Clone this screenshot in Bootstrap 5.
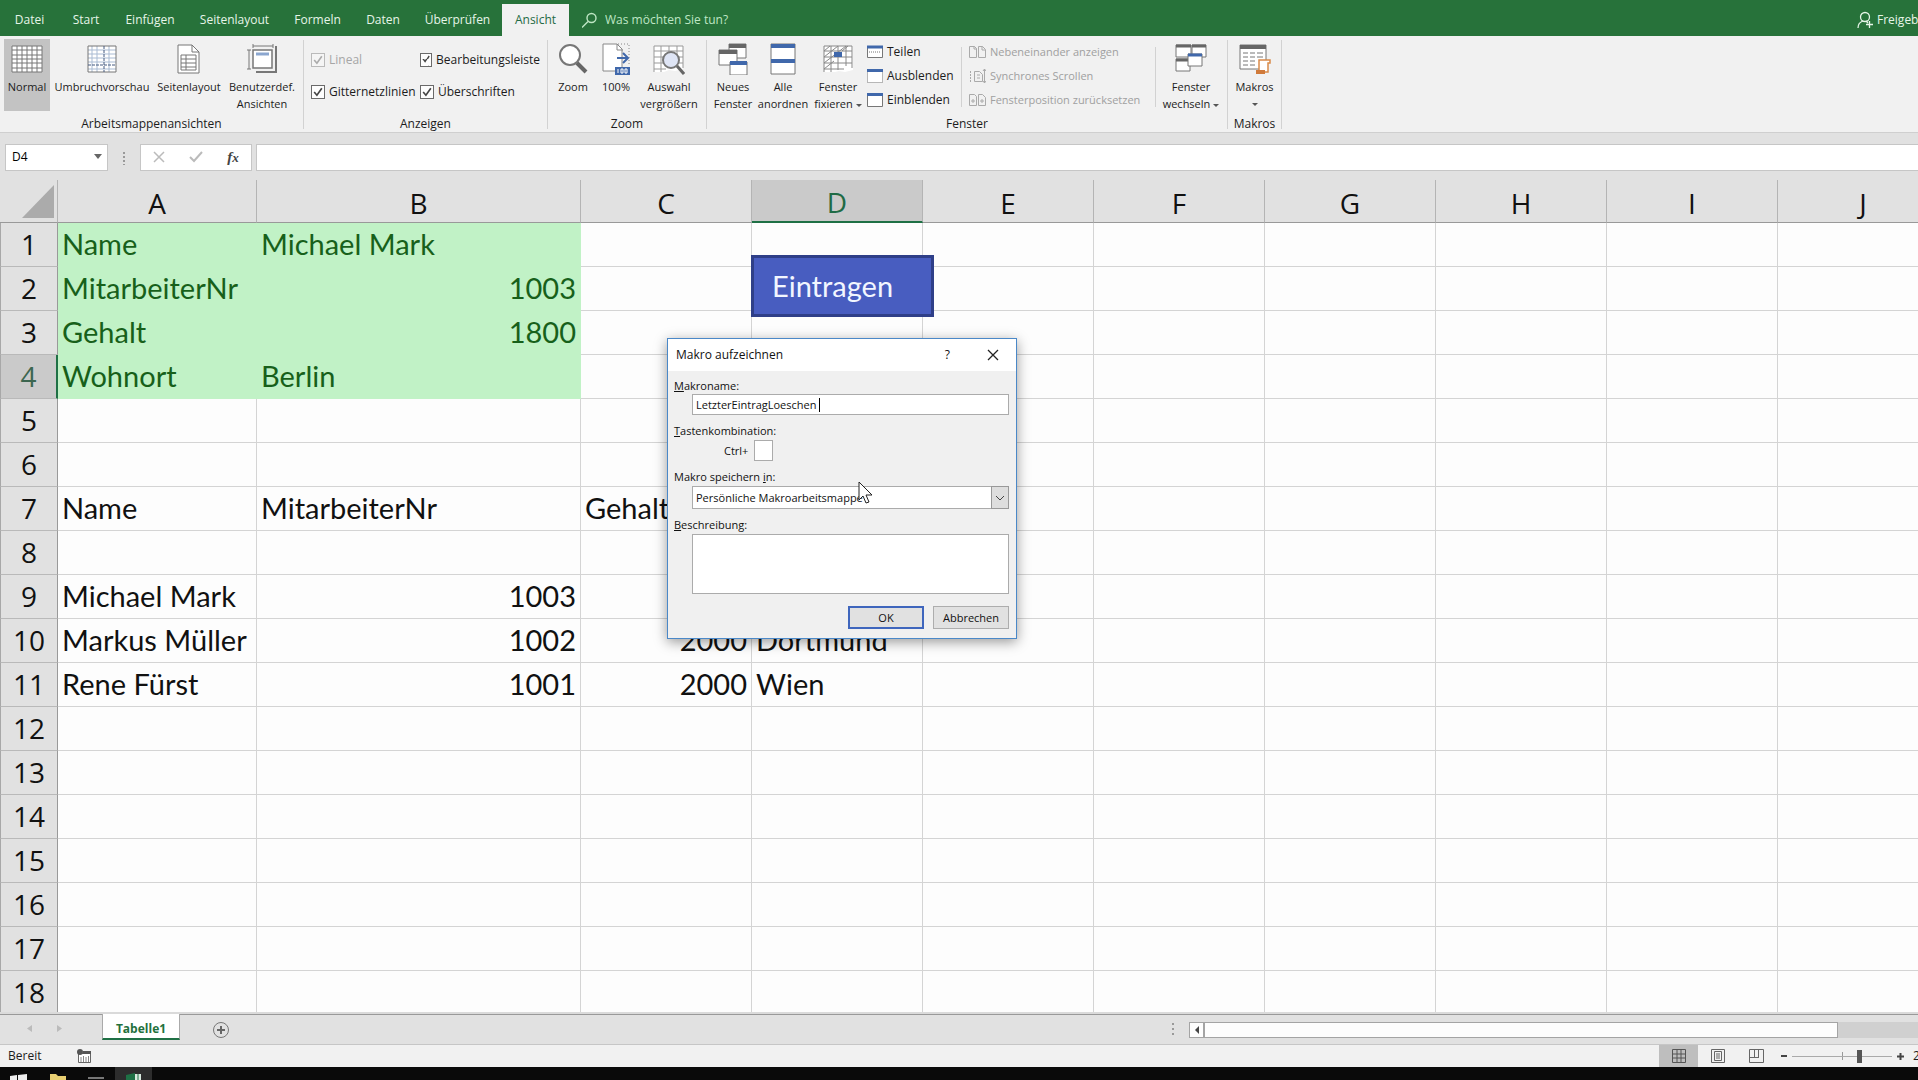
<!DOCTYPE html>
<html lang="de">
<head>
<meta charset="utf-8">
<meta name="viewport" content="width=device-width, initial-scale=1">
<title>Tabelle1 – Excel</title>
<link href="https://cdn.jsdelivr.net/npm/bootstrap@5.3.0/dist/css/bootstrap.min.css" rel="stylesheet">
<style>
:root{--green:#27723a;--ui:"Open Sans","Noto Sans",sans-serif}
body{font-family:var(--ui);font-size:12px;line-height:16px;color:#1c1c1c;background:#e1e1e1;height:100vh}
button{font:inherit;color:inherit;background:none;border:0;padding:0}
svg{display:block;flex:none;fill:none}
.top-tabs{background:var(--green);height:36px;color:#e6f5e8}
.tab-grid{display:grid;grid-template-columns:59px 54px 74px 95px 71px 60px 89px 67px;padding-top:4px}
.tab-grid a{color:inherit;text-decoration:none;height:32px;line-height:32px;text-align:center}
.tab-grid a.active{background:#f1f1f1;color:#1f6b45}
.tell{margin-left:13px;color:#bfe6c4}
.tell input{background:none;border:0;outline:0;color:inherit;width:160px;padding:0}
.tell input::placeholder{color:inherit;opacity:1}
.share{width:61px;overflow:hidden;white-space:nowrap}
.ribbon{background:#f1f1f1;height:97px;border-bottom:1px solid #cfcfcf}
.rgroup{height:89px;margin-top:4px;border-right:1px solid #d2d2d2;display:flex;flex-direction:column;justify-content:space-between;text-align:center}
.rgroup>.caption{height:13px;white-space:nowrap}
.g-views{width:304px}.g-show{width:244px}.g-zoom{width:159px}.g-win{width:521px}.g-mac{width:54px}
.rbtn{display:flex;flex-direction:column;align-items:center;height:72px;padding-top:4px;white-space:nowrap;font-size:11px;font-weight:500;line-height:17px;margin-top:-1px}
.rbtn svg{height:32px;width:32px;margin-bottom:3px}
.rbtn.on{background:#c3c3c3}
.w46{width:46px}.w104{width:104px}.w76{width:76px}.w70{width:70px}.w42{width:42px}.w44{width:44px}.w56{width:56px}.w62{width:62px}.w54{width:54px}
.caret{display:inline-block;border:3px solid transparent;border-top-color:#555;border-bottom:0;vertical-align:middle;margin-left:3px}
.stackcol{display:flex;flex-direction:column;height:73px;width:94px;margin-left:2px;text-align:left;white-space:nowrap}
.stackcol button{display:flex;align-items:center;gap:4px;height:24px;text-align:left}
.stackcol.off{color:#a0a0a0;width:195px;margin-left:0;padding-left:8px;font-size:11px;font-weight:500;background:linear-gradient(#d2d2d2,#d2d2d2) 0 7px/1px 60px no-repeat,linear-gradient(#d2d2d2,#d2d2d2) 100% 7px/1px 60px no-repeat}
.checks{display:grid;grid-template-columns:109px 120px;row-gap:16px;padding:12px 0 0 7px;text-align:left}
.checks label{display:flex;align-items:center;gap:4px;white-space:nowrap}
.checks input{appearance:none;width:14px;height:14px;margin:0;border:1px solid #6a6a6a;background:#fdfdfd url("data:image/svg+xml,%3Csvg xmlns='http://www.w3.org/2000/svg' viewBox='0 0 11 11'%3E%3Cpath d='M2 5.5l2.5 3L9 2' fill='none' stroke='%23444' stroke-width='1.5'/%3E%3C/svg%3E")}
.checks .dim{color:#a6a6a6}.checks .dim input{opacity:.4}
.fbar{padding:11px 0 0 5px;height:48px}
.fbox{background:#fff;border:1px solid #c6c6c6;height:27px}
.fbox input{border:0;outline:0;background:none;width:70px;padding:0 0 0 6px}
.name-box{width:103px}.fn-box{width:112px}
.fx{font:italic bold 15px "Liberation Serif",serif;color:#444}
.fline{border-right:0;outline:0}
.sheet{overflow:hidden;position:relative;border-bottom:2px solid #dadada}
.grid-t{table-layout:fixed;border-collapse:separate;border-spacing:0;width:1949px}
.grid-t th{font-weight:400;font-size:28px;text-align:center;background:#e1e1e1;color:#111;padding:0}
.grid-t thead th{height:42px;line-height:38px;padding-top:3px;border-right:1px solid #b4b4b4;border-bottom:1px solid #999}
.grid-t tbody th{height:44px;border-right:1px solid #999;border-bottom:1px solid #b9b9b9;border-left:1px solid #a8a8a8;line-height:38px;padding-bottom:2px}
.grid-t td{background:#fdfdfd;border-right:1px solid #d4d4d4;border-bottom:1px solid #d4d4d4;height:44px;padding:0 4px 2px;line-height:40px;white-space:nowrap;color:#111;font-family:Lato,"Open Sans",sans-serif;font-size:29px}
.grid-t .n{text-align:right}
.grid-t td.g{background:#c1f2c6;border-color:#c1f2c6;color:#17601a}
.grid-t thead th.sel{background:#cacaca;color:#1f6b45;border-bottom:2px solid #1f7045}
.grid-t tbody th.sel{background:#cacaca;color:#3c6650;border-right:2px solid #1f7045}
.c0{width:58px}.ca{width:199px}.cb{width:324px}.cx{width:171px}
.macro-btn{position:absolute;left:751px;top:75px;width:183px;height:62px;background:#485dc0;border:3px solid #2f3f88;color:#f2f6ff;font:29px/52px Lato,"Open Sans",sans-serif;text-align:left;padding-left:18px}
.dlg{position:absolute;left:667px;top:158px;width:350px;height:301px;background:#f0f0f0;border:1px solid #4a88c8;box-shadow:0 3px 12px rgba(0,0,0,.4);color:#111;font-size:11px;font-weight:500;padding:0 7px 0 6px}
.dlg-title{background:#fff;height:32px;margin:0 -7px 0 -6px;padding:0 17px 0 8px;font-size:12px;font-weight:400}
.help{margin-right:37px}
.dlg label{display:block;height:18px;line-height:17px;margin-top:7px}
.dlg .first{height:19px;padding-top:2px;margin-top:4px}
.dlg .fld{display:block;margin-left:18px;width:317px;border:1px solid #ababab;border-radius:0;background:#fff;outline:0;font-size:11px;font-weight:500;color:#111;padding:0 3px;resize:none;appearance:none}
.h21{height:21px}.h23{height:23px}.h60{height:60px}
.drop{position:absolute;right:0;top:0;width:18px;height:23px;background:#dedede;border:1px solid #999;pointer-events:none}
.keyrow{padding-left:50px}.keyrow span{width:30px}
.key{width:19px;height:21px;border:1px solid #ababab;padding:0}
.btnrow{gap:9px;margin-top:12px}
.pbtn{width:76px;height:23px;background:#e1e1e1;border:1px solid #adadad}
.pbtn.main{border:2px solid #3f66bd}
.txtcaret{position:absolute;left:151px;top:59px;width:1px;height:14px;background:#000}
.pointer{position:absolute;left:858px;top:301px}
.tabsbar{height:30px;background:#e1e1e1;border-top:1px solid #999}
.sheet-tab{width:78px;height:26px;margin-top:-1px;background:#fff;border:1px solid #aaa;border-top:0;border-bottom:2px solid #1f7045;color:#23703c;font-weight:700;line-height:29px;text-align:center;text-decoration:none}
.track{width:729px;height:16px;background:#d0d0d0}
.track button,.track div{border:1px solid #a4a4a4;background:#fdfdfd;height:16px}
.arrow{width:15px;display:flex;align-items:center;justify-content:center}
.thumb{width:634px}
.status{height:23px;background:#f1f1f1;border-top:1px solid #c6c6c6}
.ready{width:77px}.pct{width:5px}
.vbtn{width:39px;height:22px;display:flex;align-items:center;justify-content:center}
.vbtn.on{background:#bebebe}
.zoomr{appearance:none;width:100px;height:14px;background:linear-gradient(#aaa,#aaa) center/100% 1px no-repeat,linear-gradient(#999,#999) center/1px 8px no-repeat}
.zoomr::-webkit-slider-thumb{appearance:none;width:5px;height:13px;background:#555}
.task{height:13px;background:#0a0a0a;overflow:hidden}
.task-x{background:#2d2d2d;width:37px}
</style>
</head>
<body class="d-flex flex-column overflow-hidden">
<header class="top-tabs d-flex align-items-stretch">
  <nav class="tab-grid">
    <a href="#">Datei</a><a href="#">Start</a><a href="#">Einfügen</a><a href="#">Seitenlayout</a><a href="#">Formeln</a><a href="#">Daten</a><a href="#">Überprüfen</a><a href="#" class="active">Ansicht</a>
  </nav>
  <div class="tell d-flex align-items-center gap-2 pt-1">
    <svg width="15" height="17" viewBox="0 0 15 17" stroke="currentColor" stroke-width="1.4"><circle cx="9.500" cy="6" r="4.5"/><path d="M6 9.500L0 15.500"/></svg>
    <input aria-label="Suche" placeholder="Was möchten Sie tun?">
  </div>
  <button class="share ms-auto d-flex align-items-center gap-1 pt-1">
    <svg width="16" height="18" viewBox="0 0 16 18" stroke="currentColor" stroke-width="1.300"><circle cx="8" cy="6" r="4.500"/><path d="M1 17c0-4 2-6 5-7M9 10l2 2M12.500 10v7M9 13.500h7"/></svg>Freigeben</button>
</header>

<section class="ribbon d-flex">
  <div class="rgroup g-views">
    <div class="d-flex ps-1">
      <button class="rbtn on w46"><svg viewBox="0 0 32 32"><path d="M1 3h30v26H1z" fill="#fff"/><path d="M1 3h30v26H1zM1 7h30M1 12h30M1 16h30M1 20h30M1 25h30M6 3v26M11 3v26M16 3v26M21 3v26M26 3v26" stroke="#777"/></svg>Normal</button>
      <button class="rbtn w104"><svg viewBox="0 0 32 32"><path d="M2 3h28v26H2z" fill="#fff"/><path d="M2 7h28M2 11h28M2 15h28M2 19h28M2 26h28M6 3v26M11 3v26M23 3v26" stroke="#a9bbd3"/><path d="M2 3h28v26H2z" stroke="#777"/><path d="M18 3v26M2 22h28" stroke="#445a80" stroke-dasharray="3 1"/></svg>Umbruchvorschau</button>
      <button class="rbtn w70"><svg viewBox="0 0 32 32"><path d="M5 2h14l7 7v21H5z" fill="#fff" stroke="#777"/><path d="M19 2v7h7M8 12h15v15H8zM8 16h15M8 20h15M8 24h15M13 12v15" stroke="#777"/></svg>Seitenlayout</button>
      <button class="rbtn w76"><svg viewBox="0 0 32 32"><path d="M7 3h20M7 1v4M27 1v4M3 7v19M1 7h4M1 26h4" stroke="#777"/><path d="M10 29h20V3" stroke="#777" stroke-width="2"/><path d="M7 7h19v18H7z" fill="#fff" stroke="#777" stroke-width="1.500"/><path d="M10 11h13" stroke="#8ba6cf" stroke-width="3"/></svg>Benutzerdef.<br>Ansichten</button>
    </div>
    <div class="caption">Arbeitsmappenansichten</div>
  </div>
  <div class="rgroup g-show">
    <div class="checks">
      <label class="dim"><input type="checkbox" checked disabled>Lineal</label>
      <label><input type="checkbox" checked>Bearbeitungsleiste</label>
      <label><input type="checkbox" checked>Gitternetzlinien</label>
      <label><input type="checkbox" checked>Überschriften</label>
    </div>
    <div class="caption">Anzeigen</div>
  </div>
  <div class="rgroup g-zoom">
    <div class="d-flex ps-1">
      <button class="rbtn w42"><svg viewBox="0 0 32 32"><circle cx="13" cy="12" r="10" fill="#fff" stroke="#777" stroke-width="2"/><path d="M20 20l9 9" stroke="#666" stroke-width="4"/></svg>Zoom</button>
      <button class="rbtn w44"><svg viewBox="0 0 32 32"><path d="M3 1h14l5 5v22H3z" fill="#fff" stroke="#888"/><path d="M17 1v6h6" stroke="#888"/><path d="M18 1h11v22" stroke="#888" stroke-dasharray="1 2"/><path d="M17 15h10M23 10l5 5-5 5" stroke="#4068ab" stroke-width="2"/><path d="M15 24h15v8H15z" fill="#4068ab"/><path d="M18 26v4M21 26h2v4h-2zM25 26h2v4h-2z" stroke="#fff"/></svg>100%</button>
      <button class="rbtn w62"><svg viewBox="0 0 32 32"><path d="M1 3h29v23l-8 2-6-1-5 2H1z" fill="#fff"/><path d="M1 29V3h29v22M1 8h29M1 14h29M1 20h29M1 26h12M8 3v26M16 3v20M24 3v20" stroke="#999"/><circle cx="18" cy="17" r="8" fill="#dfe5f5" stroke="#777" stroke-width="2"/><path d="M24 23l7 8" stroke="#666" stroke-width="3"/></svg>Auswahl<br>vergrößern</button>
    </div>
    <div class="caption">Zoom</div>
  </div>
  <div class="rgroup g-win">
    <div class="d-flex ps-1">
      <button class="rbtn w44"><svg viewBox="0 0 32 32"><path d="M12 1h17v14H12z" fill="#fff" stroke="#777"/><path d="M12 3h17" stroke="#666" stroke-width="4"/><path d="M2 7h18v15H2z" fill="#fff" stroke="#777"/><path d="M2 9h18" stroke="#666" stroke-width="4"/><path d="M13 19h17v13H13z" fill="#fff" stroke="#777"/><path d="M13 20h17" stroke="#4068ab" stroke-width="4"/></svg>Neues<br>Fenster</button>
      <button class="rbtn w56"><svg viewBox="0 0 32 32"><path d="M4 1h24v30H4z" fill="#fff" stroke="#777"/><path d="M4 3h24M4 18h24" stroke="#4068ab" stroke-width="4"/></svg>Alle<br>anordnen</button>
      <button class="rbtn w54"><svg viewBox="0 0 32 32"><path d="M2 3h29v24l-8 2-6-1-4 1H2z" fill="#fff"/><path d="M2 29V3h28v22M2 8h28M2 14h28M2 20h28M2 26h20M9 3v26M16 3v24M24 3v20M2 8l6-5M2 14L16 3M2 20L24 3M2 26l10-8M20 8l6-5" stroke="#888"/><path d="M12 9h8v5h-8z" fill="#4068ab"/></svg>Fenster<br><span>fixieren<i class="caret"></i></span></button>
      <div class="stackcol">
        <button><svg width="16" height="16" viewBox="0 0 16 16"><path d="M.5 2.500h15v11H.5z" fill="#fff" stroke="#777"/><path d="M0 3h16" stroke="#4068ab" stroke-width="3"/><path d="M2 8h12" stroke="#777" stroke-dasharray="1 1"/></svg>Teilen</button>
        <button><svg width="16" height="16" viewBox="0 0 16 16"><path d="M.5 2.500h15v12H.5z" fill="#fff" stroke="#777" stroke-dasharray="1 1"/><path d="M0 2.500h16" stroke="#4068ab" stroke-width="3"/></svg>Ausblenden</button>
        <button><svg width="16" height="16" viewBox="0 0 16 16"><path d="M.5 1.500h15v13H.5z" fill="#fff" stroke="#777"/><path d="M0 2.500h16" stroke="#4068ab" stroke-width="3"/></svg>Einblenden</button>
      </div>
      <div class="stackcol off">
        <button><svg width="17" height="16" viewBox="0 0 17 16" stroke="#aaa"><path d="M.5 2.500h5l2 2v9h-7zM9.500 2.500h4l3 3v8h-7zM5 2v3h3M13 2v4h3"/></svg>Nebeneinander anzeigen</button>
        <button><svg width="17" height="16" viewBox="0 0 17 16" stroke="#aaa"><path d="M5.500 3.500h5l3 3v7h-8zM8 7h3M8 10h3M15.500 1v14M14 3l1.500-2L17 3M14 13l1.500 2 1.500-2"/><path d="M1.500 3v11" stroke-dasharray="2 1"/></svg>Synchrones Scrollen</button>
        <button><svg width="17" height="16" viewBox="0 0 17 16" stroke="#aaa"><path d="M.5 2.500h5l2 2v9h-7zM9.500 2.500h4l3 3v8h-7zM2 9h4M4 7v4M11 9h4M13 7v4"/></svg>Fensterposition zurücksetzen</button>
      </div>
      <button class="rbtn w62 ms-1"><svg viewBox="0 0 32 32"><path d="M1 2h15v12H1zM17 2h14v12H17zM1 16h14v12H1z" fill="#fff" stroke="#777"/><path d="M1 3h15M17 3h14M1 17h14" stroke="#666" stroke-width="3"/><path d="M13 11h14v12H13z" fill="#fff" stroke="#777"/><path d="M13 12h14" stroke="#4068ab" stroke-width="3"/></svg>Fenster<br><span>wechseln<i class="caret"></i></span></button>
    </div>
    <div class="caption">Fenster</div>
  </div>
  <div class="rgroup g-mac">
    <button class="rbtn"><svg viewBox="0 0 32 32"><path d="M1 2h26v24H1z" fill="#fff" stroke="#777"/><path d="M1 4h26" stroke="#666" stroke-width="4"/><path d="M4 10h5M11 10h5M18 10h6M4 14h5M11 14h5M18 14h6M4 18h5M11 18h5M4 22h5M11 22h5" stroke="#777"/><path d="M20 17h11v3h-2v9h-9z" fill="#fff" stroke="#d98b4a" stroke-width="1.500"/><path d="M17 29h9" stroke="#d07a3a" stroke-width="4"/></svg>Makros<i class="caret mt-2 ms-0"></i></button>
    <div class="caption">Makros</div>
  </div>
</section>

<section class="fbar d-flex">
  <div class="fbox name-box d-flex align-items-center"><input aria-label="Namenfeld" value="D4"><button aria-label="Namen anzeigen" class="ms-auto me-1 d-flex"><svg width="10" height="6"><path d="M1 0h8L5 5z" fill="#666"/></svg></button></div>
  <svg width="32" height="27"><path d="M16 8v2M16 12v2M16 16v2M16 20v1" stroke="#999" stroke-width="2"/></svg>
  <div class="fbox fn-box d-flex align-items-center justify-content-around">
    <button aria-label="Abbrechen"><svg width="12" height="12"><path d="M1 1l10 10M11 1L1 11" stroke="#bbb" stroke-width="1.500"/></svg></button>
    <button aria-label="Eingeben"><svg width="14" height="12"><path d="M1 6l4 4 8-9" stroke="#bbb" stroke-width="2"/></svg></button>
    <button aria-label="Funktion einfügen" class="fx">f<small>x</small></button>
  </div>
  <input class="fbox fline flex-grow-1 ms-1" aria-label="Bearbeitungsleiste">
</section>

<main class="sheet flex-grow-1">
<table class="grid-t">
<colgroup><col class="c0"><col class="ca"><col class="cb"><col class="cx"><col class="cx"><col class="cx"><col class="cx"><col class="cx"><col class="cx"><col class="cx"><col class="cx"></colgroup>
<thead><tr><th aria-label="Alles markieren"><svg width="56" height="38"><path d="M54 1v33H22z" fill="#ababab"/></svg></th><th>A</th><th>B</th><th>C</th><th class="sel">D</th><th>E</th><th>F</th><th>G</th><th>H</th><th>I</th><th>J</th></tr></thead>
<tbody>
<tr><th>1</th><td class="g">Name</td><td class="g">Michael Mark</td><td></td><td></td><td></td><td></td><td></td><td></td><td></td><td></td></tr>
<tr><th>2</th><td class="g">MitarbeiterNr</td><td class="g n">1003</td><td></td><td></td><td></td><td></td><td></td><td></td><td></td><td></td></tr>
<tr><th>3</th><td class="g">Gehalt</td><td class="g n">1800</td><td></td><td></td><td></td><td></td><td></td><td></td><td></td><td></td></tr>
<tr><th class="sel">4</th><td class="g">Wohnort</td><td class="g">Berlin</td><td></td><td></td><td></td><td></td><td></td><td></td><td></td><td></td></tr>
<tr><th>5</th><td></td><td></td><td></td><td></td><td></td><td></td><td></td><td></td><td></td><td></td></tr>
<tr><th>6</th><td></td><td></td><td></td><td></td><td></td><td></td><td></td><td></td><td></td><td></td></tr>
<tr><th>7</th><td>Name</td><td>MitarbeiterNr</td><td>Gehalt</td><td></td><td></td><td></td><td></td><td></td><td></td><td></td></tr>
<tr><th>8</th><td></td><td></td><td></td><td></td><td></td><td></td><td></td><td></td><td></td><td></td></tr>
<tr><th>9</th><td>Michael Mark</td><td class="n">1003</td><td></td><td></td><td></td><td></td><td></td><td></td><td></td><td></td></tr>
<tr><th>10</th><td>Markus Müller</td><td class="n">1002</td><td class="n">2000</td><td>Dortmund</td><td></td><td></td><td></td><td></td><td></td><td></td></tr>
<tr><th>11</th><td>Rene Fürst</td><td class="n">1001</td><td class="n">2000</td><td>Wien</td><td></td><td></td><td></td><td></td><td></td><td></td></tr>
<tr><th>12</th><td></td><td></td><td></td><td></td><td></td><td></td><td></td><td></td><td></td><td></td></tr>
<tr><th>13</th><td></td><td></td><td></td><td></td><td></td><td></td><td></td><td></td><td></td><td></td></tr>
<tr><th>14</th><td></td><td></td><td></td><td></td><td></td><td></td><td></td><td></td><td></td><td></td></tr>
<tr><th>15</th><td></td><td></td><td></td><td></td><td></td><td></td><td></td><td></td><td></td><td></td></tr>
<tr><th>16</th><td></td><td></td><td></td><td></td><td></td><td></td><td></td><td></td><td></td><td></td></tr>
<tr><th>17</th><td></td><td></td><td></td><td></td><td></td><td></td><td></td><td></td><td></td><td></td></tr>
<tr><th>18</th><td></td><td></td><td></td><td></td><td></td><td></td><td></td><td></td><td></td><td></td></tr>
</tbody>
</table>
<button class="macro-btn">Eintragen</button>
<form class="dlg" role="dialog" aria-label="Makro aufzeichnen" onsubmit="return false">
  <div class="dlg-title d-flex align-items-center"><span>Makro aufzeichnen</span><button type="button" class="help ms-auto">?</button><button type="button" aria-label="Schließen"><svg width="12" height="12"><path d="M1 1l10 10M11 1L1 11" stroke="#222" stroke-width="1.300"/></svg></button></div>
  <label for="mn" class="first"><u>M</u>akroname:</label>
  <input id="mn" class="fld h21" value="LetzterEintragLoeschen"><span class="txtcaret"></span>
  <label for="tk"><u>T</u>astenkombination:</label>
  <div class="keyrow d-flex align-items-center"><span>Ctrl+</span><input id="tk" class="key" maxlength="1"></div>
  <label for="ms">Makro speichern <u>i</u>n:</label>
  <div class="position-relative"><select id="ms" class="fld h23"><option>Persönliche Makroarbeitsmappe</option></select><span class="drop d-flex align-items-center justify-content-center"><svg width="10" height="6"><path d="M1 1l4 4 4-4" stroke="#444"/></svg></span></div>
  <label for="bs"><u>B</u>eschreibung:</label>
  <textarea id="bs" class="fld h60"></textarea>
  <div class="btnrow d-flex justify-content-end"><button class="pbtn main">OK</button><button type="button" class="pbtn">Abbrechen</button></div>
</form>
<svg class="pointer" width="16" height="24" viewBox="0 0 16 24"><path d="M1 1v18l4-4 3 7 3-1-3-7h6z" fill="#fff" stroke="#222"/></svg>
</main>

<section class="tabsbar d-flex">
  <svg width="102" height="28"><path d="M32 10v7l-5-3.500zM57 10v7l5-3.500z" fill="#bbb"/></svg>
  <a href="#" class="sheet-tab">Tabelle1</a>
  <button aria-label="Neues Blatt" class="d-flex align-items-center ms-4 ps-2"><svg width="18" height="18"><circle cx="9" cy="9" r="7.500" stroke="#777"/><path d="M9 5v8M5 9h8" stroke="#666" stroke-width="2"/></svg></button>
  <svg class="ms-auto" width="18" height="28"><path d="M2 8v2M2 13v2M2 18v2" stroke="#999" stroke-width="2"/></svg>
  <div class="track d-flex align-self-center"><button class="arrow" aria-label="Nach links"><svg width="6" height="8"><path d="M5 0v8L1 4z" fill="#444"/></svg></button><div class="thumb"></div></div>
</section>
<footer class="status d-flex align-items-center">
  <span class="ready ps-2">Bereit</span>
  <svg width="15" height="15" viewBox="0 0 15 15"><path d="M1.500 4.500h12v9h-12z" fill="#fff" stroke="#666"/><path d="M6 2h8v3H6z" fill="#555"/><circle cx="3" cy="3" r="3" fill="#555"/><path d="M4 8v5M6.500 7v6M9 8v5M11.500 7v6" stroke="#888"/></svg>
  <button class="vbtn on ms-auto" aria-label="Normal"><svg width="14" height="14"><path d="M.5.5h13v13H.5zM.5 5h13M.5 9h13M5 .5v13M9 .5v13" stroke="#555"/></svg></button>
  <button class="vbtn" aria-label="Seitenlayout"><svg width="14" height="14"><path d="M.5.5h13v13H.5zM3.500 2.500h7v9h-7zM5 5h4M5 7h4M5 9h4" stroke="#666"/></svg></button>
  <button class="vbtn" aria-label="Umbruchvorschau"><svg width="15" height="14"><path d="M.5.5h14v13H.5zM5.500 0v8M9.500 0v8M1 8.500h9" stroke="#666"/></svg></button>
  <button class="ms-1 me-1" aria-label="Verkleinern"><svg width="8" height="8"><path d="M1 4h6" stroke="#444" stroke-width="2"/></svg></button>
  <input type="range" class="zoomr" min="0" max="100" value="68" aria-label="Zoom">
  <button class="ms-1 me-2" aria-label="Vergrößern"><svg width="9" height="9"><path d="M4.500 1v7M1 4.500h7" stroke="#444" stroke-width="2"/></svg></button>
  <span class="pct overflow-hidden">200%</span>
</footer>
<div class="task d-flex">
  <svg width="115" height="13"><path d="M10 9l7-1v5h-7zM18 8l9-1v6h-9z" fill="#eee"/><path d="M50 7h6l2 2h8v4H50z" fill="#e8cf72"/><path d="M88 11h16" stroke="#777" stroke-width="2"/></svg>
  <div class="task-x"><svg width="37" height="13"><path d="M11 8l9-2v7h-9z" fill="#1e7145"/><path d="M20 7h6v6h-6z" fill="#d9eadf"/><path d="M23 7v6" stroke="#1e7145"/></svg></div>
</div>
<script src="https://cdn.jsdelivr.net/npm/bootstrap@5.3.0/dist/js/bootstrap.bundle.min.js"></script>
</body>
</html>
